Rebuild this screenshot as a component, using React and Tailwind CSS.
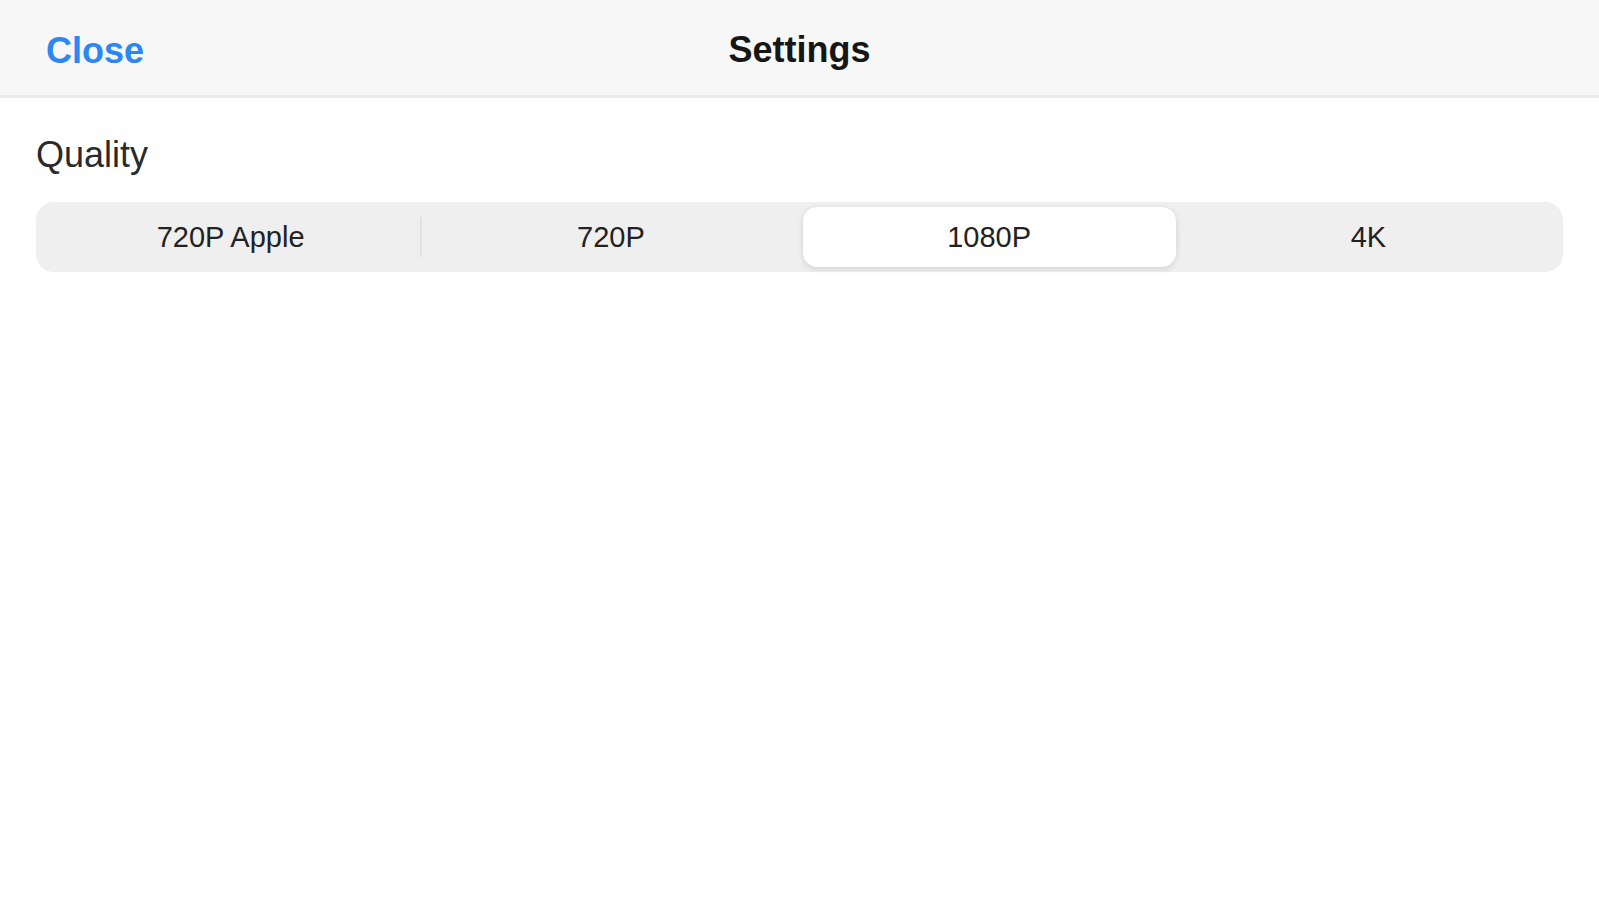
import React, { useState } from 'react';

const options = ['720P Apple', '720P', '1080P', '4K'];

export default function App() {
  const [quality, setQuality] = useState('1080P');
  const selected = options.indexOf(quality);

  return (
    <div className="min-h-screen w-full bg-white font-['Liberation_Sans',Arial,sans-serif]">
      {/* Header */}
      <div className="relative flex h-[98px] items-center justify-center border-b-[3px] border-[#ebebeb] bg-[#f7f7f7] pt-[4px]">
        <button className="absolute left-[46px] top-[31px] text-[36px] font-bold leading-[40px] text-[#2b87f2]">
          Close
        </button>
        <h1 className="text-[36px] font-bold leading-[40px] text-[#161616]">Settings</h1>
      </div>

      {/* Content */}
      <div className="px-[36px] pt-[39px]">
        <div className="text-[36px] leading-[36px] text-[#2a2a2a]">Quality</div>
        <div className="mt-[29px] flex h-[70px] items-stretch rounded-[18px] bg-[#efefef] p-[5px]">
          {options.map((opt, i) => {
            const active = i === selected;
            const showDivider = i > 0 && i !== selected && i - 1 !== selected;
            return (
              <div key={opt} className="relative flex flex-1 items-center">
                {showDivider && <div className="h-[40px] w-[2px] bg-[#e2e2e2]" />}
                <button
                  onClick={() => setQuality(opt)}
                  className={
                    'flex h-full flex-1 items-center justify-center rounded-[14px] text-[29px] leading-none text-[#222] ' +
                    (active ? 'mx-[3px] bg-white shadow-[0_2px_6px_rgba(0,0,0,0.12),0_0_1px_rgba(0,0,0,0.08)]' : '')
                  }
                >
                  {opt}
                </button>
              </div>
            );
          })}
        </div>
      </div>
    </div>
  );
}
